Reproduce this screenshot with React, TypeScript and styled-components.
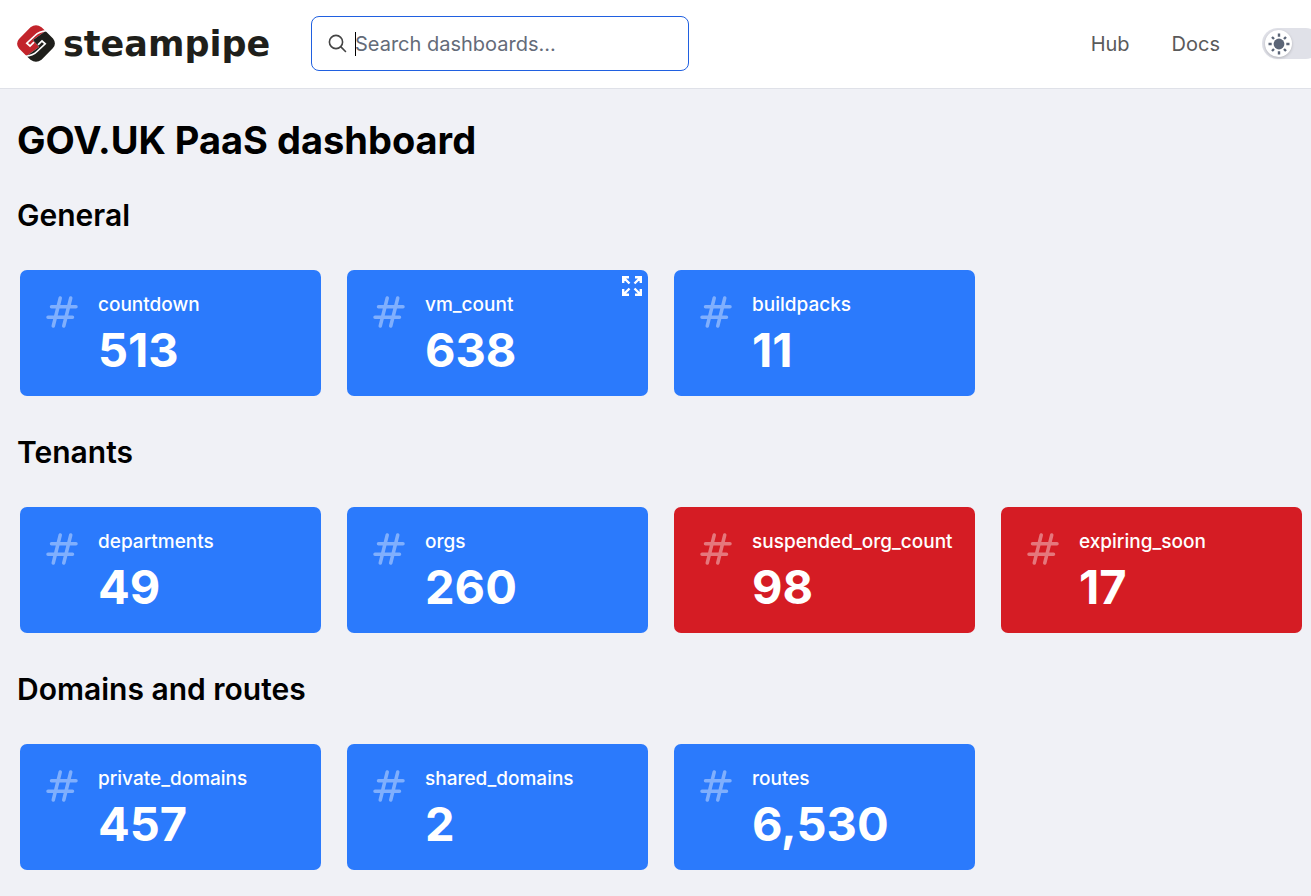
import React from "react";
import styled, { createGlobalStyle } from "styled-components";

const GlobalStyle = createGlobalStyle`
  *, *::before, *::after { box-sizing: border-box; }
  html, body { margin: 0; overflow-x: hidden; background: #f0f1f6; }
  body {
    font-family: Inter, "Liberation Sans", sans-serif;
    color: #000;
  }
`;

const Header = styled.header`
  display: flex;
  align-items: center;
  padding: 16px 0 17px 17px;
  overflow: hidden;
  background: #fff;
  border-bottom: 1px solid #dfe1e8;
`;

const LogoLink = styled.a`
  display: flex;
  align-items: center;
  gap: 8px;
  flex: none;
  width: 294px;
  color: #1f1f1b;
  text-decoration: none;
`;

const Wordmark = styled.span`
  font-family: "DejaVu Sans", sans-serif;
  font-size: 35px;
  font-weight: 700;
  line-height: 40px;
`;

const SearchBox = styled.label`
  display: flex;
  align-items: center;
  gap: 7px;
  flex: 0 1 378px;
  min-width: 0;
  height: 55px;
  padding: 0 16px;
  border: 1px solid #2060e0;
  border-radius: 8px;
  background: #fff;
  color: #444;
`;

const SearchInput = styled.input`
  flex: 1;
  width: 100%;
  min-width: 0;
  padding: 0;
  border: 0;
  outline: 0;
  background: transparent;
  font: 400 20px/28px Inter, "Liberation Sans", sans-serif;
  color: #000;
  &::placeholder { color: #646b79; opacity: 1; }
`;

const Caret = styled.span`
  flex: none;
  width: 1px;
  height: 24px;
  margin-right: -8px;
  background: #000;
`;

const Nav = styled.nav`
  display: flex;
  align-items: center;
  gap: 42px;
  margin-left: auto;
  margin-right: -10px;
`;

const NavLink = styled.a`
  font-size: 20px;
  line-height: 28px;
  color: #5a5a5a;
  text-decoration: none;
`;

const ThemeToggle = styled.button`
  display: flex;
  align-items: center;
  flex: none;
  width: 59px;
  height: 31px;
  padding: 0 3px;
  border: 0;
  border-radius: 16px;
  background: #e0e1e8;
`;

const Knob = styled.span`
  display: flex;
  align-items: center;
  justify-content: center;
  width: 27px;
  height: 27px;
  border-radius: 50%;
  background: #fff;
  box-shadow: 0 1px 3px rgba(0, 0, 0, 0.2);
`;

const Main = styled.main`
  padding: 27px 9px 27px 17px;
`;

const PageTitle = styled.h1`
  margin: 0 0 31px;
  font-size: 38px;
  font-weight: 700;
  line-height: 48px;
`;

const Section = styled.section`
  & + & {
    margin-top: 36px;
  }
`;

const SectionTitle = styled.h2`
  margin: 0 0 35px;
  font-size: 30px;
  font-weight: 600;
  line-height: 40px;
`;

const CardGrid = styled.div`
  display: grid;
  grid-template-columns: repeat(4, minmax(0, 1fr));
  gap: 26px;
  padding-left: 3px;
`;

const CardBox = styled.article<{ $alert?: boolean }>`
  position: relative;
  display: flex;
  gap: 15px;
  padding: 21px 21px 18px;
  border-radius: 7px;
  background: ${(p) => (p.$alert ? "#d51c24" : "#2b7afc")};
  color: #fff;
`;

const CardBody = styled.div`
  min-width: 0;
`;

const CardLabel = styled.h3`
  margin: 0;
  font-size: 19px;
  font-weight: 500;
  line-height: 28px;
`;

const CardValue = styled.p`
  margin: 3px 0 0;
  font-size: 47px;
  font-weight: 700;
  line-height: 56px;
`;

const ExpandButton = styled.button`
  position: absolute;
  top: 6px;
  right: 6px;
  display: flex;
  padding: 0;
  border: 0;
  background: transparent;
  color: #fff;
`;

const HashSvg = styled.svg`
  flex: none;
  opacity: 0.4;
`;

const HashIcon = () => (
  <HashSvg width="42" height="42" viewBox="0 0 24 24" fill="none" stroke="currentColor" strokeWidth="2" strokeLinecap="round" aria-hidden="true">
    <path d="M7 20l4-16m2 16l4-16M6 9h14M4 15h14" />
  </HashSvg>
);

const ExpandIcon = () => (
  <svg width="20" height="20" viewBox="0 0 20 20" fill="none" stroke="currentColor" strokeWidth="2.4" aria-hidden="true">
    <path d="M1.200 7V1.200H7M1.500 1.500l6 6M13 1.200h5.800V7M18.500 1.500l-6 6M1.200 13v5.800H7M1.500 18.500l6-6M13 18.800h5.800V13M18.500 18.500l-6-6" />
  </svg>
);

const SearchIcon = () => (
  <svg width="20" height="20" viewBox="0 0 20 20" fill="none" stroke="currentColor" strokeWidth="1.6" strokeLinecap="round" aria-hidden="true">
    <circle cx="8" cy="8" r="6.600" />
    <path d="M12.900 12.900L17.500 17.500" />
  </svg>
);

const SunIcon = () => (
  <svg width="22" height="22" viewBox="0 0 22 22" fill="none" stroke="#5b6577" strokeWidth="2.4" aria-hidden="true">
    <circle cx="11" cy="11" r="5.400" fill="#5b6577" stroke="none" />
    <path d="M11 .5v3.200M11 18.300v3.200M.5 11h3.200M18.300 11h3.200M4 4l2 2M16 16l2 2M4 18l2-2M16 6l2-2" />
  </svg>
);

const LogoMark = () => (
  <svg width="38" height="37" viewBox="0 0 38 37" aria-hidden="true">
    <path fill="#c2242b" d="M13.500 2.200Q19 -1.800 24.500 2.200L28.500 6L16 15L22 22L9.500 31L2 23.500Q-1.800 18.500 2 14Z" />
    <path fill="#1f1f1b" d="M24.500 34.800Q19 38.800 13.500 34.800L9.500 31L22 22L16 15L28.500 6L36 13.500Q39.800 18.500 36 23Z" />
    <g fill="none" stroke="#fff" strokeWidth="1.700">
      <path d="M30 5.500Q22 6.500 18 10.500L9.800 18.200L13 21L17 17.200" />
      <path d="M8 31.500Q16 30.500 20 26.500L28.200 18.800L25 16L21 19.800" />
    </g>
  </svg>
);

type Metric = { label: string; value: string; alert?: boolean; expand?: boolean };

const sections: { title: string; metrics: Metric[] }[] = [
  {
    title: "General",
    metrics: [
      { label: "countdown", value: "513" },
      { label: "vm_count", value: "638", expand: true },
      { label: "buildpacks", value: "11" },
    ],
  },
  {
    title: "Tenants",
    metrics: [
      { label: "departments", value: "49" },
      { label: "orgs", value: "260" },
      { label: "suspended_org_count", value: "98", alert: true },
      { label: "expiring_soon", value: "17", alert: true },
    ],
  },
  {
    title: "Domains and routes",
    metrics: [
      { label: "private_domains", value: "457" },
      { label: "shared_domains", value: "2" },
      { label: "routes", value: "6,530" },
    ],
  },
];

const MetricCard = ({ label, value, alert, expand }: Metric) => (
  <CardBox $alert={alert}>
    <HashIcon />
    <CardBody>
      <CardLabel>{label}</CardLabel>
      <CardValue>{value}</CardValue>
    </CardBody>
    {expand && (
      <ExpandButton type="button" aria-label={`Expand ${label}`}>
        <ExpandIcon />
      </ExpandButton>
    )}
  </CardBox>
);

export default function App() {
  return (
    <>
      <GlobalStyle />
      <Header>
        <LogoLink href="#" aria-label="steampipe">
          <LogoMark />
          <Wordmark>steampipe</Wordmark>
        </LogoLink>
        <SearchBox>
          <SearchIcon />
          <Caret />
          <SearchInput type="text" aria-label="Search dashboards" placeholder="Search dashboards..." />
        </SearchBox>
        <Nav>
          <NavLink href="#">Hub</NavLink>
          <NavLink href="#">Docs</NavLink>
          <ThemeToggle type="button" aria-label="Toggle theme">
            <Knob>
              <SunIcon />
            </Knob>
          </ThemeToggle>
        </Nav>
      </Header>
      <Main>
        <PageTitle>GOV.UK PaaS dashboard</PageTitle>
        {sections.map((section) => (
          <Section key={section.title}>
            <SectionTitle>{section.title}</SectionTitle>
            <CardGrid>
              {section.metrics.map((metric) => (
                <MetricCard key={metric.label} {...metric} />
              ))}
            </CardGrid>
          </Section>
        ))}
      </Main>
    </>
  );
}
